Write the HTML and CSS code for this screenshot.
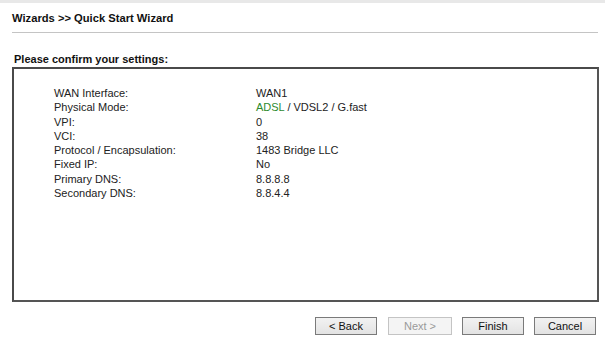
FILE: index.html
```html
<!DOCTYPE html>
<html>
<head>
<meta charset="utf-8">
<link rel="stylesheet" href="styles.css">
</head>
<body>
<div class="topband"></div>
<div class="header">Wizards &gt;&gt; Quick Start Wizard</div>
<div class="rule"></div>
<div class="subtitle">Please confirm your settings:</div>
<div class="box">
  <div class="rows">
    <div class="label">WAN Interface:</div><div class="value">WAN1</div>
    <div class="label">Physical Mode:</div><div class="value"><span class="green">ADSL</span> / VDSL2 / G.fast</div>
    <div class="label">VPI:</div><div class="value">0</div>
    <div class="label">VCI:</div><div class="value">38</div>
    <div class="label">Protocol / Encapsulation:</div><div class="value">1483 Bridge LLC</div>
    <div class="label">Fixed IP:</div><div class="value">No</div>
    <div class="label">Primary DNS:</div><div class="value">8.8.8.8</div>
    <div class="label">Secondary DNS:</div><div class="value">8.8.4.4</div>
  </div>
</div>
<div class="buttons">
  <button class="btn">&lt; Back</button>
  <button class="btn btn-next" disabled>Next &gt;</button>
  <button class="btn">Finish</button>
  <button class="btn">Cancel</button>
</div>
</body>
</html>
```
FILE: styles.css
```css
html, body {
  margin: 0;
  padding: 0;
  background: #ffffff;
  font-family: "Liberation Sans", Arial, sans-serif;
  color: #1a1a1a;
  width: 605px;
  height: 341px;
  overflow: hidden;
}
.topband {
  height: 3px;
  background: #e8e8e8;
}
.header {
  font-weight: bold;
  font-size: 11.2px;
  line-height: 14px;
  padding: 8px 0 0 12px;
  height: 22px;
  box-sizing: border-box;
  color: #111;
}
.rule {
  margin: 7px 7px 0 12px;
  height: 1px;
  background: #c4c4c4;
}
.subtitle {
  font-weight: bold;
  font-size: 11px;
  line-height: 14px;
  padding: 19px 0 0 14px;
  height: 34px;
  box-sizing: border-box;
  color: #111;
}
.box {
  margin: 0 6px 0 12px;
  height: 235px;
  box-sizing: border-box;
  border: 2px solid #4a4a4a;
  border-right-color: #555;
  border-bottom-color: #555;
}
.rows {
  display: grid;
  grid-template-columns: 202px auto;
  padding: 17px 0 0 40px;
  font-size: 11px;
  line-height: 14.25px;
  color: #222;
}
.green {
  color: #2e8b2e;
}
.buttons {
  display: flex;
  justify-content: flex-end;
  gap: 10px;
  padding: 15px 9px 0 0;
}
.btn {
  width: 62px;
  height: 18px;
  padding: 0;
  font-family: "Liberation Sans", Arial, sans-serif;
  font-size: 11px;
  color: #111;
  background: linear-gradient(#f2f2f2, #e3e3e3);
  border: 1px solid #7a7a7a;
  border-radius: 0;
}
.btn-next {
  width: 64px;
  margin-left: 1px;
}
.btn:disabled {
  color: #9a9a9a;
  background: #f4f4f4;
  border-color: #c4c4c4;
}
```
